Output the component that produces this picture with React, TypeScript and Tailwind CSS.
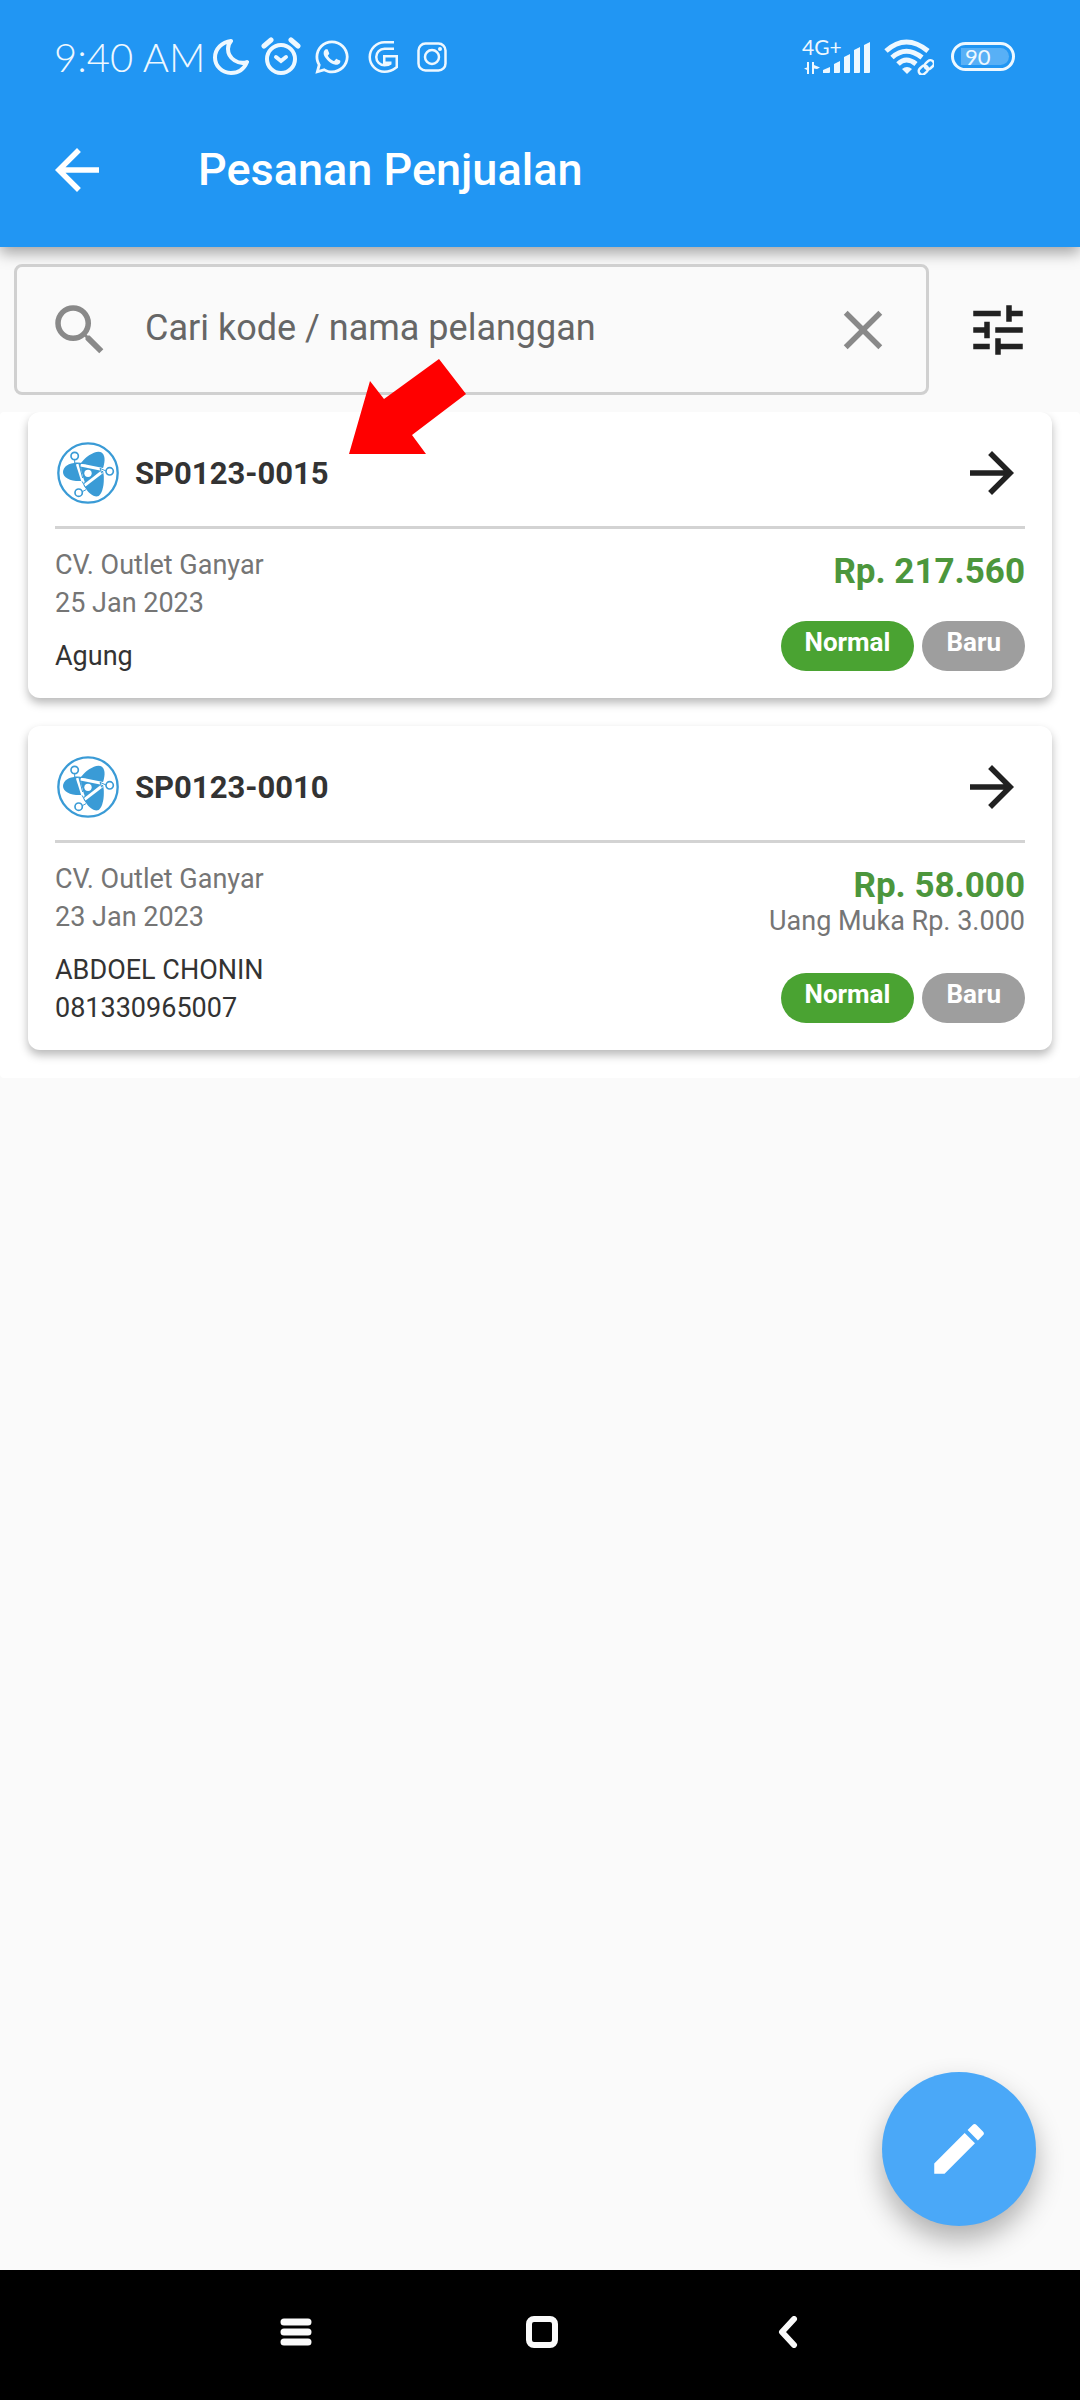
import React, { useState } from 'react';
import { MdArrowBack, MdArrowForward, MdClose, MdEdit, MdSearch, MdTune } from 'react-icons/md';
import { FaWhatsapp } from 'react-icons/fa';

interface Order {
  code: string;
  outlet: string;
  date: string;
  customer: string[];
  total: string;
  downPayment?: string;
}

const ORDERS: Order[] = [
  {
    code: 'SP0123-0015',
    outlet: 'CV. Outlet Ganyar',
    date: '25 Jan 2023',
    customer: ['Agung'],
    total: 'Rp. 217.560'
  },
  {
    code: 'SP0123-0010',
    outlet: 'CV. Outlet Ganyar',
    date: '23 Jan 2023',
    customer: ['ABDOEL CHONIN', '081330965007'],
    total: 'Rp. 58.000',
    downPayment: 'Uang Muka Rp. 3.000'
  }
];

const StatusBar = () => (
  <div className="flex h-[93px] items-center justify-between pt-5 pr-[65px] pl-[54px] font-[Lato,sans-serif] text-[#eef8ff]">
    <div className="flex items-center">
      <span className="w-[156px] text-[40px] leading-10 font-light whitespace-nowrap">9:40 AM</span>
      {/* do not disturb */}
      <svg className="ml-[3px] h-9 w-9" viewBox="0 0 36 36" fill="none" stroke="currentColor" strokeWidth="4" strokeLinejoin="round">
        <path d="M18 2C9 3 2 10 2 18.500C2 27 9 34 18 34C25 34 31 30 34 23C26 26 15 20 15 10C15 7 16 4 18 2Z" />
      </svg>
      {/* alarm */}
      <svg className="ml-3 h-10 w-10" viewBox="0 0 40 40" fill="none" stroke="currentColor" strokeWidth="4" strokeLinecap="round">
        <circle cx="20" cy="22" r="14" />
        <path d="M3 9L10 3M37 9L30 3" strokeWidth="5" />
        <path d="M15 20L20 24L25 20" />
      </svg>
      <FaWhatsapp className="ml-3 h-[38px] w-[38px]" />
      {/* google */}
      <svg className="ml-4 h-[34px] w-8" viewBox="0 0 32 34" fill="none">
        <path d="M27 5.500H17.500A11.500 11.500 0 0 0 17.500 28.500C21 28.500 24 27.500 26.500 25.500V19.500H16" stroke="currentColor" strokeWidth="9" />
        <path d="M28 5.500H17.500A11.500 11.500 0 0 0 17.500 28.500C21 28.500 24 27.500 26.500 25.500V19.500H18.500" stroke="#2196f3" strokeWidth="4" />
      </svg>
      {/* instagram */}
      <svg className="ml-[18px] h-[30px] w-[30px]" viewBox="0 0 30 30" fill="none" stroke="currentColor" strokeWidth="2.500">
        <rect x="1.500" y="1.500" width="27" height="27" rx="7" />
        <circle cx="15" cy="15" r="7" />
        <circle cx="23" cy="7" r="2" fill="currentColor" stroke="none" />
      </svg>
    </div>
    <div className="flex items-center">
      {/* mobile signal */}
      <svg className="h-12 w-[70px]" viewBox="0 -6 70 48" fill="currentColor">
        <text x="0" y="16" fontSize="21">4G+</text>
        <path d="M7 23V35H5V31L2 29.500L5 28.500V23ZM10 23H12V26L18 28.500L15 30L12 29.500V35H10Z" />
        <path d="M21 34V31L28 28V33Q28 34 27 34H22ZM32 25L38 22V33Q38 34 37 34H32ZM42 18L48 15V33Q48 34 47 34H42ZM52 11L58 8V33Q58 34 57 34H52ZM62 6L68 3V33Q68 34 67 34H62Z" />
      </svg>
      {/* wifi */}
      <svg className="ml-3 h-9 w-[50px]" viewBox="0 0 50 36" fill="none" stroke="currentColor" strokeWidth="5">
        <path d="M2 12Q22 -6 44 12M8 18.500Q22 6 38 18.500M14 25Q22 17 32 25" />
        <path d="M18 30Q23 26 28 30L23 35Z" fill="currentColor" stroke="none" />
        <g strokeWidth="2.500" transform="rotate(-42 42 28)">
          <rect x="33" y="25" width="10" height="7" rx="3.500" />
          <rect x="41" y="25" width="10" height="7" rx="3.500" />
        </g>
      </svg>
      {/* battery */}
      <div className="ml-[17px] flex h-[29px] w-16 rounded-full border-[3px] border-current p-[3px]">
        <div className="ml-1 flex flex-1 items-center rounded-l-sm rounded-r-full bg-white/25 pl-1 text-[22px] leading-5">90</div>
      </div>
    </div>
  </div>
);

const OrderLogo = () => (
  <svg className="ml-0.5 h-[62px] w-[62px]" viewBox="21 34 186 186" fill="none" stroke="#3a9bd6">
    <circle cx="114" cy="127" r="89" strokeWidth="7" />
    <g fill="#3a9bd6" stroke="none">
      <path d="M94 97C62 92 39 106 39 124C39 142 62 153 97 151Z" />
      <path d="M92 98C108 76 140 55 156 66C168 76 164 98 157 119Z" />
      <path d="M158 116C166 146 160 190 144 197C131 200 114 188 101 164Z" />
      <path d="M92 100L158 116L102 166Z" />
    </g>
    <g stroke="#fff" strokeWidth="9">
      <path d="M82 100L100 156" />
      <path d="M92 103L162 117" />
      <path d="M103 165L156 124" />
    </g>
    <path d="M74 85V97L104 99M87 100L98 142M155 128L150 113L168 121M96 152L107 171M97 183L108 177" strokeWidth="3" />
    <circle cx="114" cy="128" r="11" fill="#fff" stroke="none" />
    <g strokeWidth="5" fill="#fff">
      <circle cx="74" cy="76" r="11" />
      <circle cx="179" cy="122" r="11" />
      <circle cx="86" cy="186" r="11" />
    </g>
  </svg>
);

const OrderCard = ({ order }: { order: Order }) => (
  <article className="rounded-xl bg-white px-[27px] shadow-[0_5px_10px_rgba(0,0,0,0.28)]">
    <div className="flex items-center border-b-[3px] border-[#d3d3d3] pt-7 pb-5">
      <OrderLogo />
      <h2 className="ml-4 flex-1 pt-0.5 text-[31px] leading-10 font-bold text-[#333]">{order.code}</h2>
      <button aria-label={`Buka ${order.code}`} className="text-[66px] text-[#212121]">
        <MdArrowForward />
      </button>
    </div>
    <div className="flex justify-between pt-[17px] pb-[23px] text-[27px]">
      <div className="leading-[38px]">
        <p className="text-[#757575]">{order.outlet}</p>
        <p className="text-[#757575]">{order.date}</p>
        <div className="mt-[15px] text-[#333]">
          {order.customer.map((line) => (
            <p key={line}>{line}</p>
          ))}
        </div>
      </div>
      <div className="flex flex-col items-end justify-between pt-1.5 pb-1">
        <div className="text-right">
          <p className="text-[35px] leading-10 font-bold text-[#4c963c]">{order.total}</p>
          {order.downPayment && <p className="leading-[30px] text-[#757575]">{order.downPayment}</p>}
        </div>
        <div className="flex gap-2 text-[26px] leading-[42px] font-bold text-white">
          <span className="h-[50px] rounded-full bg-[#4aa332] px-6">Normal</span>
          <span className="h-[50px] rounded-full bg-[#9e9e9e] px-6">Baru</span>
        </div>
      </div>
    </div>
  </article>
);

export default function App() {
  const [query, setQuery] = useState('');

  const orders = ORDERS.filter((o) =>
    [o.code, ...o.customer].join(' ').toLowerCase().includes(query.toLowerCase())
  );

  return (
    <div className="relative flex min-h-screen flex-col bg-[#fafafa] font-[Roboto,sans-serif]">
      <header className="bg-[#2196f3] text-white shadow-[0_6px_14px_rgba(0,0,0,0.35)]">
        <StatusBar />
        <div className="flex h-[154px] items-center pl-11">
          <button aria-label="Kembali" className="text-[66px]">
            <MdArrowBack />
          </button>
          <h1 className="ml-[88px] text-[45px] leading-[52px] font-medium">Pesanan Penjualan</h1>
        </div>
      </header>

      <main className="relative flex-1">
        <div className="flex items-center py-[17px] pr-[49px] pl-3.5">
          <div className="flex h-[131px] flex-1 items-center rounded-lg border-[3px] border-[#d0d0d0] bg-[#fafafa] px-[30px]">
            <MdSearch className="h-[66px] w-[66px] text-[#898989]" />
            <input
              type="text"
              aria-label="Cari kode / nama pelanggan"
              placeholder="Cari kode / nama pelanggan"
              value={query}
              onChange={(e) => setQuery(e.target.value)}
              className="ml-8 min-w-0 flex-1 pb-1 text-[36px] leading-[42px] text-[#333] outline-none placeholder:text-[#666]"
            />
            <button aria-label="Hapus" onClick={() => setQuery('')} className="text-[66px] text-[#898989]">
              <MdClose />
            </button>
          </div>
          <button aria-label="Filter" className="ml-9 text-[66px] text-[#212121]">
            <MdTune />
          </button>
        </div>

        <section className="flex flex-col gap-7 overflow-hidden rounded-sm bg-white px-7 pb-7">
          {orders.map((order) => (
            <OrderCard key={order.code} order={order} />
          ))}
        </section>

        <button
          aria-label="Buat pesanan"
          className="absolute right-11 bottom-11 flex h-[154px] w-[154px] items-center justify-center rounded-full bg-[#4aa8f8] text-[66px] text-white shadow-[0_14px_28px_rgba(0,0,0,0.3)]"
        >
          <MdEdit />
        </button>
      </main>

      <nav className="flex h-[130px] items-center justify-center bg-black pb-1.5 pl-1 text-[#fafafa]">
        <button aria-label="Aplikasi terbaru" className="flex w-[246px] justify-center">
          <svg className="h-8 w-8" viewBox="0 0 32 32" stroke="currentColor" strokeWidth="7" strokeLinecap="round">
            <path d="M4 6H28M4 16H28M4 26H28" />
          </svg>
        </button>
        <button aria-label="Beranda" className="flex w-[246px] justify-center">
          <svg className="h-8 w-8" viewBox="0 0 32 32" fill="none" stroke="currentColor" strokeWidth="6">
            <rect x="3" y="3" width="26" height="26" rx="5" />
          </svg>
        </button>
        <button aria-label="Kembali ke layar sebelumnya" className="flex w-[246px] justify-center">
          <svg className="h-8 w-5" viewBox="0 0 20 32" fill="none" stroke="currentColor" strokeWidth="6" strokeLinecap="round" strokeLinejoin="round">
            <path d="M16 3L4 16L16 29" />
          </svg>
        </button>
      </nav>

      {/* pointer to the newest order */}
      <svg className="pointer-events-none absolute top-[359px] left-[349px] h-24 w-[118px]" viewBox="0 0 118 96" fill="#f00">
        <path d="M90 0L117 35L63 76L77 95H0L21 22L35 40Z" />
      </svg>
    </div>
  );
}
